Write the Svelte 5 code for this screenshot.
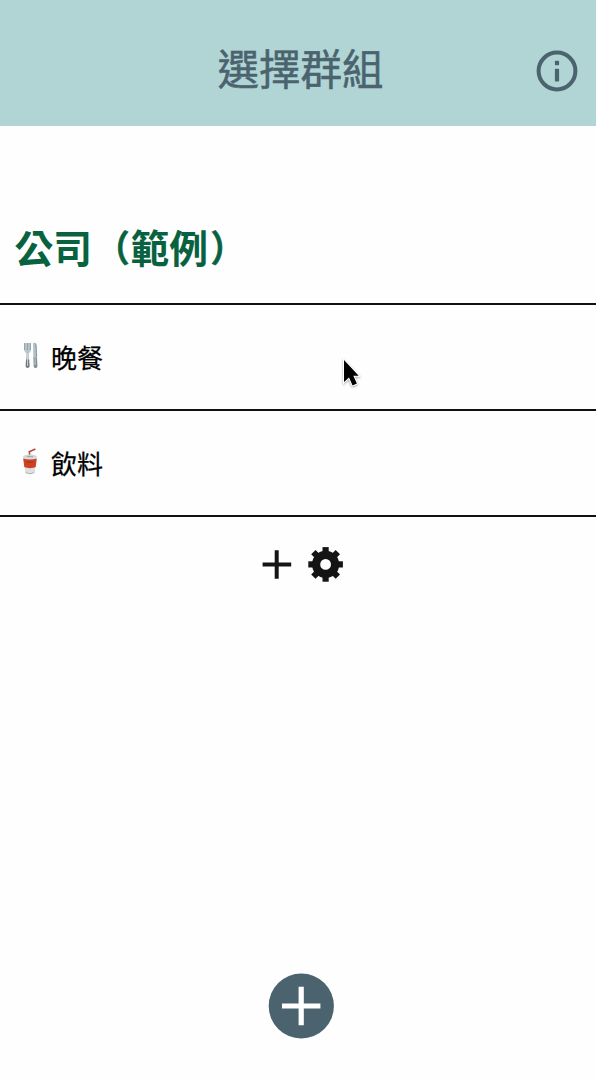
<script>
  const items = [
    { icon: 'cutlery', label: '晚餐' },
    { icon: 'drink', label: '飲料' }
  ];
  const teeth = [0, 45, 90, 135, 180, 225, 270, 315];
</script>

<main>
  <header>
    <h1>選擇群組</h1>
    <button class="info" aria-label="Info">
      <svg width="42" height="42" viewBox="0 0 42 42">
        <circle cx="21" cy="21" r="18.4" fill="none" stroke="#4b636f" stroke-width="4" />
        <rect x="18.9" y="10.8" width="4.2" height="4.4" rx=".7" fill="#4b636f" />
        <rect x="18.9" y="18.8" width="4.2" height="12.6" rx=".7" fill="#4b636f" />
      </svg>
    </button>
  </header>

  <h2>公司<span class="paren open">（</span>範例<span class="paren close">）</span></h2>

  <ul>
    {#each items as item}
      <li>
        {#if item.icon === 'cutlery'}
          <svg class="emoji" width="22" height="28" viewBox="0 0 22 28">
            <path d="M4.3 1v7c0 2 1.2 2.5 2 3.2L5.7 24c0 2.6 3.8 2.6 3.8 0L8.8 11.2c1-.7 2-1.3 2-3.2V1" fill="#b9c7cc" />
            <path d="M4.6 1v7M7.5 1v7M10.4 1v7" stroke="#93a5ad" stroke-width="1.1" fill="none" />
            <path d="M6.1 17.5 5.7 24c0 2.4 3.8 2.4 3.8 0l-.4-6.5Z" fill="#6d7578" />
            <path d="M7.6 12v12" stroke="#cbd7da" stroke-width="1" />
            <path d="M13 1.8c0-1.5 3-1.5 3.2 1L17 14l.3 10.2c0 2.3-3.5 2.3-3.5 0L13.3 15Z" fill="#b2c3c9" />
            <path d="M15.7 1.5c.8 3 .4 8 1 13" stroke="#80939b" stroke-width="1" fill="none" />
            <path d="m13.6 15.5.2 8.7c0 2.3 3.5 2.3 3.5 0L17 15.5Z" fill="#858e91" />
            <path d="M15.1 16v7" stroke="#c5d0d3" stroke-width="1" />
          </svg>
        {:else}
          <svg class="emoji" width="22" height="28" viewBox="0 0 22 28">
            <path d="M9.8 8 9.3 3.8 15.4 1" fill="none" stroke="#b64b3d" stroke-width="1.6" />
            <path d="M3.2 8.5h13.5l-2 15.6c-.5 2.6-9 2.6-9.5 0Z" fill="#dde0df" />
            <ellipse cx="10" cy="8.5" rx="6.8" ry="1.9" fill="#cfd6d6" />
            <path d="M7 8.5h6" stroke="#a3aaaa" stroke-width="1" />
            <path d="M3.2 10.5c4 1.4 9.6 1.4 13.6 0L15.7 19c-3.2 1.5-8.2 1.5-11.4 0Z" fill="#cf4124" />
            <path d="M6.2 14.2c2-1.4 3.5 1 7-.4" stroke="#a83420" stroke-width="1.3" fill="none" />
            <path d="M5.3 24c2.5 2.2 6.8 2.2 9.3 0" stroke="#a9afaf" stroke-width="1" fill="none" />
          </svg>
        {/if}
        <span>{item.label}</span>
      </li>
    {/each}
  </ul>

  <div class="actions">
    <button aria-label="Add">
      <svg width="30" height="36" viewBox="0 0 30 36">
        <path d="M.6 18.5h28.6M14.7 4.2v28.6" stroke="#141414" stroke-width="4" />
      </svg>
    </button>
    <button aria-label="Settings">
      <svg width="36" height="36" viewBox="-17.6 -18.4 36 36">
        <circle r="9.5" fill="none" stroke="#141414" stroke-width="8.2" />
        {#each teeth as angle}
          <rect x="-3.1" y="-17.3" width="6.2" height="6" fill="#141414" transform="rotate({angle})" />
        {/each}
      </svg>
    </button>
  </div>

  <button class="fab" aria-label="New group">
    <svg width="66" height="66" viewBox="0 0 66 66">
      <circle cx="33.3" cy="33" r="32.6" fill="#4b636f" />
      <path d="M14 33h38.4M33.2 13.8v38.4" stroke="#fff" stroke-width="5.2" />
    </svg>
  </button>

  <svg class="cursor" width="24" height="34" viewBox="0 0 24 34">
    <path d="M3 3v22l5-4.5 3.6 8 4.3-2-3.6-7.7h5.4Z" fill="#000" stroke="#fff" stroke-width="2" paint-order="stroke" />
  </svg>
</main>

<style>
  :global(body) {
    margin: 0;
    background: #fff;
  }

  main {
    position: relative;
    display: flex;
    flex-direction: column;
    height: 1080px;
    overflow: hidden;
    background: #fefefe;
    font-family: "Noto Sans CJK TC", sans-serif;
  }

  button {
    display: flex;
    padding: 0;
    border: 0;
    background: none;
  }

  svg {
    display: block;
    flex: none;
  }

  header {
    display: grid;
    grid-template-columns: 60px 1fr 60px;
    align-items: center;
    box-sizing: border-box;
    height: 125.5px;
    padding-top: 16px;
    background: #b0d5d4;
  }

  h1 {
    grid-column: 2;
    margin: 0 0 7px 5px;
    text-align: center;
    color: #4b636f;
    font-size: 41.5px;
    font-weight: 400;
    line-height: 60px;
    -webkit-text-stroke: 0.5px #4b636f;
  }

  h2 {
    box-sizing: border-box;
    height: 177.5px;
    margin: 0;
    padding: 91.5px 0 0 14.5px;
    color: #08623f;
    font-size: 38.7px;
    font-weight: 700;
    line-height: 58px;
    white-space: nowrap;
  }

  .paren {
    display: inline-block;
    -webkit-text-stroke: 0.8px #08623f;
  }

  .open {
    transform: translateX(-1px) scale(0.85, 0.93);
    transform-origin: 95% 50%;
  }

  .close {
    transform: translateX(2.5px) scale(0.85, 0.93);
    transform-origin: 5% 50%;
  }

  ul {
    margin: 0;
    padding: 0;
    border-top: 2px solid #111;
    list-style: none;
  }

  li {
    display: flex;
    align-items: center;
    box-sizing: border-box;
    height: 106px;
    padding-left: 20px;
    border-bottom: 2px solid #111;
    color: #000;
    font-size: 26px;
    line-height: 38px;
    -webkit-text-stroke: 0.25px #000;
  }

  .emoji {
    margin: 0 9px 2px 0;
  }

  .actions {
    display: flex;
    justify-content: center;
    gap: 16px;
    padding: 29px 0 0 9px;
  }

  .fab {
    margin: auto 0 41px 268px;
    align-self: flex-start;
  }

  .cursor {
    position: absolute;
    left: 341px;
    top: 357px;
    filter: drop-shadow(0 1px 1px rgba(0, 0, 0, 0.35));
  }
</style>
